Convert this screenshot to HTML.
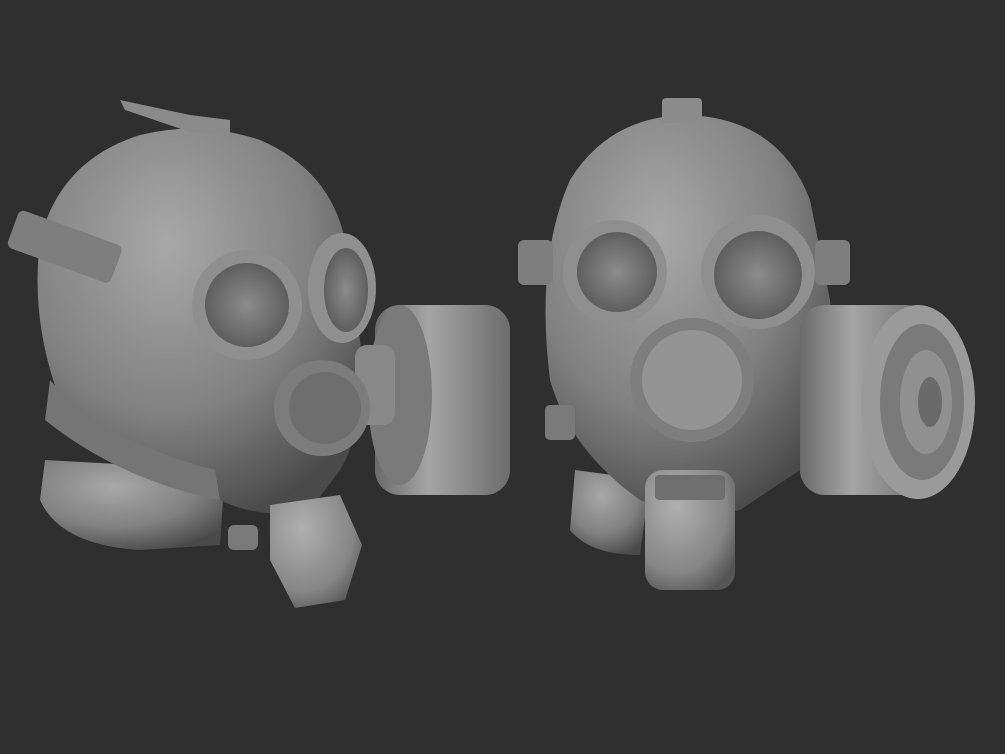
<!DOCTYPE html>
<html><head><meta charset="utf-8"><style>
html,body{margin:0;padding:0;background:#2f2f2f;width:1005px;height:754px;overflow:hidden}
</style></head><body>
<svg width="1005" height="754" viewBox="0 0 1005 754" xmlns="http://www.w3.org/2000/svg">
<defs>
<radialGradient id="g" cx="40%" cy="30%" r="75%">
<stop offset="0" stop-color="#a8a8a8"/><stop offset="0.6" stop-color="#808080"/><stop offset="1" stop-color="#4a4a4a"/></radialGradient>
<radialGradient id="g2" cx="35%" cy="30%" r="80%">
<stop offset="0" stop-color="#b0b0b0"/><stop offset="0.7" stop-color="#858585"/><stop offset="1" stop-color="#555"/></radialGradient>
<linearGradient id="c" x1="0" y1="0" x2="1" y2="0">
<stop offset="0" stop-color="#6a6a6a"/><stop offset="0.4" stop-color="#a5a5a5"/><stop offset="1" stop-color="#6c6c6c"/></linearGradient>
<radialGradient id="lens" cx="50%" cy="50%" r="55%">
<stop offset="0" stop-color="#8c8c8c"/><stop offset="1" stop-color="#5a5a5a"/></radialGradient>
</defs>
<rect width="1005" height="754" fill="#2f2f2f"/>
<!-- LEFT MASK -->
<path d="M45,460 L40,500 Q60,545 140,550 L220,545 L225,470 Z" fill="url(#g)"/>
<path d="M40,240 Q60,160 140,135 Q200,120 260,140 Q330,170 345,240 L360,340 Q370,420 340,470 L310,510 Q260,520 220,500 Q120,470 60,400 Q30,320 40,240 Z" fill="url(#g)"/>
<rect x="10" y="225" width="110" height="40" rx="6" fill="#7e7e7e" transform="rotate(20 60 245)"/>
<path d="M120,100 L190,115 L230,120 L230,135 L190,132 L125,110 Z" fill="#8a8a8a"/>
<path d="M50,380 Q100,440 215,470 L220,500 Q120,480 45,420 Z" fill="#757575"/>
<circle cx="247" cy="305" r="55" fill="#8f8f8f"/><circle cx="247" cy="305" r="42" fill="url(#lens)"/>
<ellipse cx="342" cy="288" rx="34" ry="55" fill="#8f8f8f"/><ellipse cx="346" cy="290" rx="22" ry="42" fill="url(#lens)"/>
<rect x="375" y="305" width="135" height="190" rx="25" fill="url(#c)"/>
<ellipse cx="400" cy="395" rx="32" ry="90" fill="#7a7a7a"/>
<rect x="355" y="345" width="40" height="80" rx="12" fill="#888"/>
<circle cx="322" cy="408" r="48" fill="#7c7c7c"/><circle cx="325" cy="408" r="36" fill="#6e6e6e"/>
<path d="M270,505 L340,495 L362,545 L345,600 L295,608 L270,560 Z" fill="url(#g2)"/>
<rect x="228" y="525" width="30" height="25" rx="6" fill="#7a7a7a"/>
<!-- RIGHT MASK -->
<path d="M575,470 L570,530 Q590,555 640,555 L650,480 Z" fill="url(#g)"/>
<path d="M570,180 Q610,115 690,115 Q780,120 810,200 L830,300 Q840,400 800,470 L740,510 Q690,520 640,500 Q570,450 550,380 Q535,260 570,180 Z" fill="url(#g)"/>
<rect x="662" y="98" width="40" height="25" rx="4" fill="#8c8c8c"/>
<rect x="518" y="240" width="35" height="45" rx="6" fill="#7e7e7e"/>
<rect x="815" y="240" width="35" height="45" rx="6" fill="#7e7e7e"/>
<circle cx="615" cy="272" r="52" fill="#8f8f8f"/><circle cx="617" cy="272" r="40" fill="url(#lens)"/>
<circle cx="758" cy="272" r="57" fill="#8f8f8f"/><circle cx="758" cy="275" r="44" fill="url(#lens)"/>
<rect x="800" y="305" width="130" height="190" rx="25" fill="url(#c)"/>
<ellipse cx="918" cy="402" rx="57" ry="97" fill="#9a9a9a"/>
<ellipse cx="922" cy="402" rx="42" ry="78" fill="#7a7a7a"/>
<ellipse cx="926" cy="402" rx="26" ry="52" fill="#909090"/>
<ellipse cx="930" cy="402" rx="12" ry="25" fill="#6a6a6a"/>
<circle cx="692" cy="380" r="62" fill="#7e7e7e"/><circle cx="692" cy="380" r="50" fill="#949494"/>
<rect x="645" y="470" width="90" height="120" rx="18" fill="url(#g2)"/>
<rect x="655" y="475" width="70" height="25" rx="4" fill="#6f6f6f"/>
<rect x="545" y="405" width="30" height="35" rx="5" fill="#7a7a7a"/>
</svg>
</body></html>
